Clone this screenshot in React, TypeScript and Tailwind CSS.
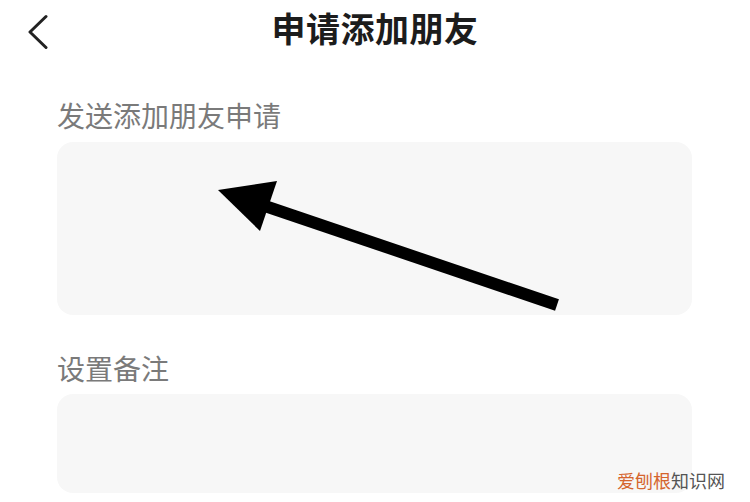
import React from 'react';

const FONT = { fontFamily: '"Noto Sans CJK SC", "Noto Sans", sans-serif' };

export default function App() {
  return (
    <div className="relative w-[750px] h-[502px] overflow-hidden bg-white" style={FONT}>
      {/* Header */}
      <div className="relative flex h-[56px] items-center justify-center">
        <button type="button" className="absolute left-[24px] top-[8px] p-1" aria-label="返回">
          <svg width="28" height="40" viewBox="0 0 28 40" fill="none">
            <polyline
              points="18,4.5 2,20 18,35.5"
              stroke="#222"
              strokeWidth="3"
              strokeLinecap="round"
              strokeLinejoin="round"
            />
          </svg>
        </button>
        <h1 className="text-[34px] font-bold leading-none tracking-[0.5px] text-[#1c1c1c]">申请添加朋友</h1>
      </div>

      {/* Form */}
      <div className="flex flex-col px-[57px] pr-[58px]">
        <label className="mt-[45px] text-[28px] leading-none text-[#7a7a7a]">发送添加朋友申请</label>
        <div className="mt-[13px] h-[173px] rounded-[16px] bg-[#f7f7f7]" />

        <label className="mt-[39px] text-[28px] leading-none text-[#7a7a7a]">设置备注</label>
        <div className="mt-[12px] h-[99px] rounded-[16px] bg-[#f7f7f7]" />
      </div>

      {/* Annotation arrow */}
      <svg className="pointer-events-none absolute inset-0" width="750" height="502" viewBox="0 0 750 502">
        <line x1="557" y1="305" x2="262" y2="205" stroke="#000" strokeWidth="12" />
        <polygon points="218,190 277,181 260,231" fill="#000" />
      </svg>

      {/* Watermark */}
      <div className="absolute left-[617px] top-[471px] text-[18px] leading-none">
        <span className="text-[#d5652e]">爱刨根</span>
        <span className="text-[#555]">知识网</span>
      </div>
    </div>
  );
}
